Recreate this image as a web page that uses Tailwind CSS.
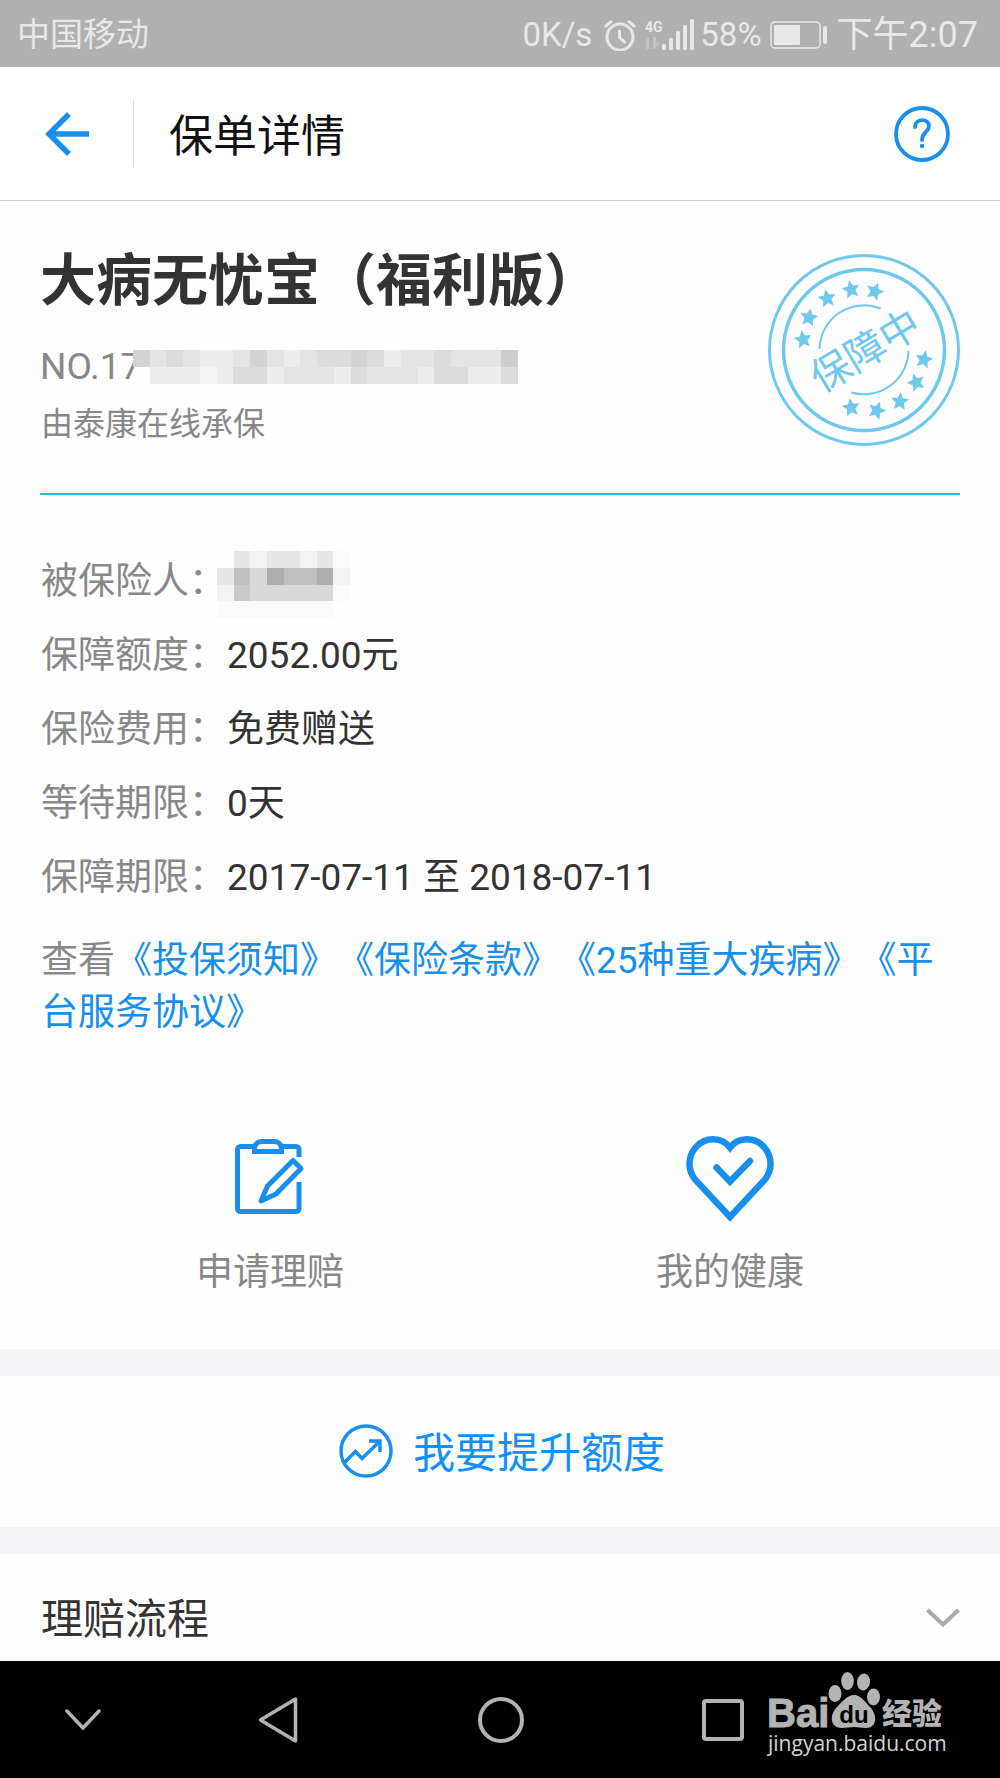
<!DOCTYPE html>
<html lang="zh-CN">
<head>
<meta charset="utf-8">
<meta name="viewport" content="width=device-width, initial-scale=1">
<title>保单详情</title>
<script src="https://cdn.jsdelivr.net/npm/@tailwindcss/browser@4"></script>
</head>
<body class="flex min-h-screen flex-col bg-[#fefefe] font-['Roboto','Noto_Sans_CJK_SC',sans-serif] text-[#333] [text-spacing-trim:space-all]">

<!-- Phone status bar -->
<div class="flex h-[67px] items-center justify-between bg-[#b0b0b0] pt-[2px] pr-[22px] pl-[17px] text-[33px] leading-[66px] text-[#e8e8e8]">
  <span>中国移动</span>
  <div class="flex items-center">
    <span class="mr-3">0K/s</span>
    <svg class="mr-[9px] h-8 w-8" viewBox="0 0 32 32" fill="none" stroke="currentColor" stroke-width="3" stroke-linecap="round" aria-hidden="true"><circle cx="16" cy="18" r="13"/><path d="M15.500 12v6.500l5 4.500M2 7l5-4.500M30 7l-5-4.500"/></svg>
    <svg class="h-8 w-[49px]" viewBox="0 0 49 32" fill="currentColor" aria-hidden="true"><text x="0" y="13" font-family="Roboto" font-size="14" font-weight="700">4G</text><path d="M4 18v5h-2v-2l-2 1 4-4v12h-3v-8zM8 18h3v6l4-1-5 7h-2z" opacity=".35"/><rect x="17" y="25" width="4" height="6" rx="1.500"/><rect x="24" y="19" width="4" height="12" rx="1.500"/><rect x="31" y="12" width="4" height="19" rx="1.500"/><rect x="38" y="6" width="4" height="25" rx="1.500"/><rect x="45" y="0" width="4" height="31" rx="1.500"/></svg>
    <span class="mr-2 ml-1.5">58%</span>
    <svg class="mr-[9px] h-7 w-[58px]" viewBox="0 0 58 28" fill="none" aria-hidden="true"><rect x="1" y="1" width="49" height="26" rx="4" stroke="currentColor" stroke-width="1.500"/><rect x="4" y="4" width="26" height="20" rx="1" fill="currentColor"/><rect x="53" y="5" width="4" height="18" rx="2" fill="currentColor"/></svg>
    <span class="text-[36px]">下午2:07</span>
  </div>
</div>

<header class="flex h-[134px] items-center border-b border-[#d0d0d0] bg-white pr-[50px] pl-[45px]">
  <button type="button" aria-label="返回" class="text-[#188fed]"><svg class="h-11 w-11" viewBox="0 0 44 44" fill="none" stroke="currentColor" stroke-width="5.500" aria-hidden="true"><path d="M44 22H4M24 2 4 22l20 20"/></svg></button>
  <span class="ml-[44px] h-[67px] w-px bg-[#d8d8d8]"></span>
  <h1 class="ml-[35px] pt-[6px] text-[44px] leading-[66px] text-[#111]">保单详情</h1>
  <button type="button" aria-label="帮助" class="ml-auto text-[#188fed]"><svg class="h-14 w-14" viewBox="0 0 56 56" fill="none" stroke="currentColor" stroke-width="3.800" stroke-linecap="round" aria-hidden="true"><circle cx="28" cy="28" r="26"/><path d="M21 21c0-9 14-9 14-1 0 6-7 6-7 14"/><circle cx="28" cy="40" r="2.200" fill="currentColor" stroke="none"/></svg></button>
</header>

<main>
  <section class="px-10">
    <div class="flex h-[294px] items-start justify-between border-b-2 border-[#2fb9dc] pt-[40px]">
      <div>
        <h2 class="text-[56px] leading-[80px] font-bold">大病无忧宝（福利版）</h2>
        <div class="mt-[19px] flex h-[54px] items-center text-[37px] text-[#888]">
          <span>NO.17</span>
          <svg class="-ml-2 h-[34px] w-[385px]" viewBox="0 0 23 2" preserveAspectRatio="none" shape-rendering="crispEdges" role="img" aria-label="已隐藏">
            <path fill="#e4e4e4" d="M0 0h23v2H1V1H0z"/>
            <path fill="#d3d3d3" d="M0 0h1v1H0zM7 0h1v1H7zM13 0h1v1h-1z"/>
            <path fill="#cdcdcd" d="M22 0h1v1h-1z"/>
            <path fill="#dbdbdb" d="M2 0h1v1H2zM6 1h2v1H6zM11 0h2v1h-2zM14 0h1v1h-1zM18 0h1v1h-1zM13 1h1v1h-1zM18 1h2v1h-2zM22 1h1v1h-1z"/>
            <path fill="#ededed" d="M4 0h2v1H4zM9 0h1v1H9zM15 0h1v1h-1zM1 1h5v1H1zM8 1h1v1H8zM12 1h1v1h-1zM17 1h1v1h-1zM20 1h2v1h-2z"/>
            <path fill="#f3f3f3" d="M4 1h1v1H4z"/>
          </svg>
        </div>
        <p class="mt-[6px] pl-px text-[32px] leading-[48px] text-[#888]">由泰康在线承保</p>
      </div>
      <svg class="mt-[12px] h-[194px] w-[194px] text-[#70c8ee]" viewBox="0 0 194 194" fill="none" stroke="currentColor" role="img" aria-label="保障中">
        <defs><path id="star" d="M0-9 2.600-3 9-2.500 4.200 2 5.500 8.500 0 5.200-5.500 8.500-4.200 2-9-2.500-2.600-3z" fill="currentColor" stroke="none"/></defs>
        <circle cx="98" cy="97" r="94.500" stroke-width="3"/>
        <circle cx="98" cy="97" r="80.500" stroke-width="3.500"/>
        <path d="M53.500 96a44.500 44.500 0 0 1 61-40.500M142.500 98a44.500 44.500 0 0 1-57 41.500" stroke-width="2"/>
        <g>
          <use href="#star" transform="translate(37 86) rotate(-10)"/><use href="#star" transform="translate(43 64) rotate(10)"/><use href="#star" transform="translate(61 45) rotate(-10)"/><use href="#star" transform="translate(85 36) rotate(-12)"/><use href="#star" transform="translate(109 38) rotate(20)"/>
          <use href="#star" transform="translate(158 106) rotate(12)"/><use href="#star" transform="translate(150 129) rotate(-20)"/><use href="#star" transform="translate(134 148) rotate(5)"/><use href="#star" transform="translate(111 157) rotate(20)"/><use href="#star" transform="translate(85 154) rotate(-8)"/>
        </g>
        <text x="99" y="112" transform="rotate(-31 99 97)" text-anchor="middle" font-size="40" fill="currentColor" stroke="none">保障中</text>
      </svg>
    </div>

    <dl class="grid grid-cols-[186px_1fr] pt-[50px] pl-px text-[37px] leading-[74px]">
      <dt class="text-[#888]">被保险人：</dt>
      <dd class="-ml-[10px] flex h-[74px] items-center">
        <svg class="mt-[4px] h-[67px] w-[133px]" viewBox="0 0 8 4" shape-rendering="crispEdges" role="img" aria-label="已隐藏">
          <path fill="#fafafa" d="M1 0h7v3H1zM0 3h7v1H0z"/>
          <path fill="#f3f3f3" d="M2 0h1v1H2zM5 0h1v1H5zM7 1h1v1H7zM0 2h1v1H0z"/>
          <path fill="#e7e7e7" d="M1 0h1v1H1zM3 0h1v1H3zM4 0h1v1H4zM6 0h1v1H6zM0 1h1v1H0z"/>
          <path fill="#d8d8d8" d="M2 1h1v1H2zM2 2h5v1H2z"/>
          <path fill="#c0c0c0" d="M1 1h1v1H1zM4 1h2v1H4z"/>
          <path fill="#c9c9c9" d="M1 2h1v1H1z"/>
          <path fill="#aeaeae" d="M3 1h1v1H3zM6 1h1v1H6z"/>
        </svg>
      </dd>
      <dt class="text-[#888]">保障额度：</dt><dd>2052.00元</dd>
      <dt class="text-[#888]">保险费用：</dt><dd>免费赠送</dd>
      <dt class="text-[#888]">等待期限：</dt><dd>0天</dd>
      <dt class="text-[#888]">保障期限：</dt><dd>2017-07-11 至 2018-07-11</dd>
    </dl>

    <p class="mt-[20px] pl-px text-[37px] leading-[52px] break-all text-[#188fed]"><span class="text-[#888]">查看</span><a href="#notice">《投保须知》</a><a href="#terms">《保险条款》</a><a href="#diseases">《25种重大疾病》</a><a href="#service">《平台服务协议》</a></p>

    <div class="grid grid-cols-2 pt-[95px] pb-[48px] text-[37px] leading-[56px] text-[#888]">
      <a href="#claim" class="flex flex-col items-center">
        <svg class="mb-[21px] h-[90px] w-[72px] text-[#188fed]" viewBox="0 -2 72 90" fill="none" stroke="currentColor" stroke-width="5" aria-hidden="true"><path d="M19 10.500H6.500a3 3 0 0 0-3 3v59a3 3 0 0 0 3 3H62a3 3 0 0 0 3-3V46M48 10.500h14a3 3 0 0 1 3 3V21"/><path d="M20.500 15.500h27v-3a7 7 0 0 0-7-7h-13a7 7 0 0 0-7 7z"/><path d="m59 24.500 8 8L42 58 27 65 33.500 50z" stroke-linejoin="round"/></svg>
        申请理赔
      </a>
      <a href="#health" class="flex flex-col items-center">
        <svg class="mb-[21px] h-[90px] w-[90px] text-[#188fed]" viewBox="0 0 90 90" fill="none" stroke="currentColor" stroke-width="6.500" aria-hidden="true"><path d="M45 13.500C37 2.500 20 2.500 11 13c-8.500 9.500-8.500 23-1 32.500L45 83l35-37.500c7.500-9.500 7.500-23-1-32.500C70 2.500 53 2.500 45 13.500z"/><path d="M31.500 33.500 45 47.500 65 27" stroke-linecap="round"/></svg>
        我的健康
      </a>
    </div>
  </section>

  <div class="border-y-[27px] border-[#f4f4f9]">
    <button type="button" class="flex h-[151px] w-full items-center justify-center gap-5 pr-px pb-px pl-[5px] text-[42px] text-[#1090ff]">
      <svg class="h-[54px] w-[54px] text-[#188fed]" viewBox="0 0 54 54" fill="none" stroke="currentColor" stroke-width="3.500" aria-hidden="true"><circle cx="27" cy="27" r="25"/><path d="m5 39 11.500-11.500 6.500 7L40 18M30 17h11v11"/></svg>
      <span class="pt-[4px]">我要提升额度</span>
    </button>
  </div>

  <button type="button" class="flex h-[107px] w-full items-start justify-between pt-[34px] pr-10 pl-[41px] text-[42px] leading-[63px]">
    理赔流程
    <svg class="mt-[20px] h-5 w-[34px] text-[#aaa]" viewBox="0 0 34 20" fill="none" stroke="currentColor" stroke-width="4" aria-hidden="true"><path d="m1.500 2 15.500 14.500L32.500 2"/></svg>
  </button>
</main>

<!-- Phone navigation keys -->
<nav class="relative mt-auto grid h-[117px] grid-cols-[166fr_223fr_223fr_222fr_166fr] items-center justify-items-center bg-black text-[#b3b3b3]">
  <button type="button" aria-label="收起"><svg class="h-6 w-9" viewBox="0 0 36 24" fill="none" stroke="currentColor" stroke-width="3.500" stroke-linecap="round"><path d="m2 3 16 17L34 3"/></svg></button>
  <button type="button" aria-label="返回"><svg class="h-12 w-10" viewBox="0 0 40 48" fill="none" stroke="currentColor" stroke-width="3.500" stroke-linejoin="round"><path d="M37.500 3v42L2.500 24z"/></svg></button>
  <button type="button" aria-label="主页"><svg class="h-12 w-12" viewBox="0 0 48 48" fill="none" stroke="currentColor" stroke-width="4"><circle cx="24" cy="24" r="21"/></svg></button>
  <button type="button" aria-label="最近任务"><svg class="h-[42px] w-[42px]" viewBox="0 0 42 42" fill="none" stroke="currentColor" stroke-width="4"><rect x="2" y="2" width="38" height="38" rx="2"/></svg></button>
  <svg class="absolute top-[9px] right-[50px] h-[92px] w-[185px]" viewBox="0 0 185 92" fill="currentColor" role="img" aria-label="Baidu经验">
    <text x="2" y="57" font-family="Liberation Sans" font-size="40" font-weight="700" stroke="currentColor" stroke-width="1">Bai</text>
    <ellipse cx="70" cy="23.500" rx="6.500" ry="8.500"/><ellipse cx="82.500" cy="11" rx="6.300" ry="9"/><ellipse cx="98.500" cy="12" rx="6.500" ry="8.500" transform="rotate(8 98.500 12)"/><ellipse cx="108.500" cy="27" rx="6.500" ry="8.500"/>
    <path d="M89 25c7 0 11 7 16 12 8 8 7 21-4 21-5 0-8-1-12-1s-7 1-12 1c-12 0-13-13-5-21 5-5 10-12 17-12z"/>
    <text x="89" y="53" text-anchor="middle" font-family="Liberation Sans" font-size="24" font-weight="700" fill="#000">du</text>
    <text x="117" y="54" font-size="30" font-weight="900">经验</text>
    <text x="3" y="81" font-family="Open Sans" font-size="21" fill="#d4d4d4">jingyan.baidu.com</text>
  </svg>
</nav>
</body>
</html>
